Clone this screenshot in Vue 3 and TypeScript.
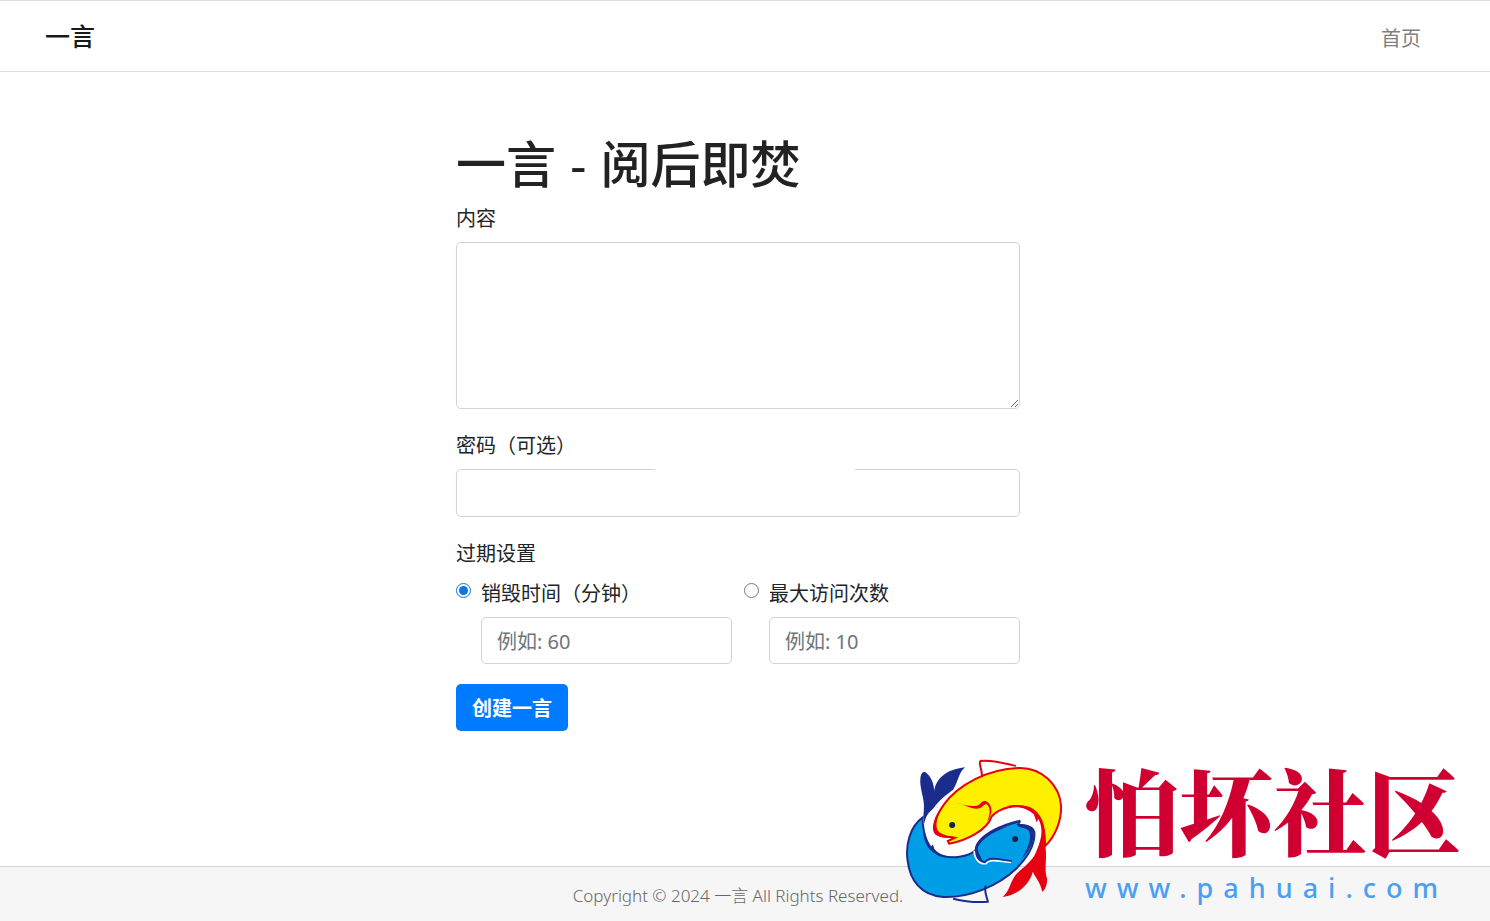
<script setup lang="ts">
import { ref } from 'vue'

type ExpiryMode = 'time' | 'visits'

const content = ref('')
const password = ref('')
const mode = ref<ExpiryMode>('time')
const minutes = ref('')
const visits = ref('')
</script>

<template>
  <div class="page">
    <header class="navbar">
      <a class="brand" href="#">一言</a>
      <nav>
        <a class="nav-link" href="#">首页</a>
      </nav>
    </header>

    <main class="main">
      <form class="form" @submit.prevent>
        <h1 class="title">一言 - 阅后即焚</h1>

        <div class="group">
          <label class="label" for="content">内容</label>
          <textarea id="content" v-model="content" class="control area"></textarea>
        </div>

        <div class="group">
          <label class="label" for="password">密码（可选）</label>
          <div class="password">
            <input id="password" v-model="password" class="control" type="text" />
          </div>
        </div>

        <fieldset class="group expiry">
          <legend class="label">过期设置</legend>
          <div class="options">
            <div class="option">
              <input id="mode-time" v-model="mode" class="radio" type="radio" name="mode" value="time" />
              <label class="option-label" for="mode-time">销毁时间（分钟）</label>
              <input v-model="minutes" class="control amount" type="text" placeholder="例如: 60" aria-label="销毁时间（分钟）" />
            </div>
            <div class="option">
              <input id="mode-visits" v-model="mode" class="radio" type="radio" name="mode" value="visits" />
              <label class="option-label" for="mode-visits">最大访问次数</label>
              <input v-model="visits" class="control amount" type="text" placeholder="例如: 10" aria-label="最大访问次数" />
            </div>
          </div>
        </fieldset>

        <button class="submit" type="submit">创建一言</button>
      </form>
    </main>

    <footer class="footer">Copyright © 2024 一言 All Rights Reserved.</footer>

    <div class="watermark">
      <svg class="fish" viewBox="40 36 485 450" aria-hidden="true">
        <path d="M92 96Q96 78 107 82C124 94 132 116 133 138C139 102 166 74 226 67C207 80 205 111 190 134C168 150 145 168 131 190C116 204 107 212 104 236Q98 216 102 196C106 160 87 130 92 96Z" fill="#1c2c8c" />
        <path d="M98 218C60 245 47 300 53 345C60 405 92 450 160 456C240 459 325 422 378 372C411 340 433 302 434 268C434 250 420 241 398 243L382 236C325 244 262 281 258 315C235 336 186 343 150 331C111 309 99 266 98 218Z" fill="#009ee7" stroke="#1c2c8c" stroke-width="6" />
        <path d="M101 244C104 277 118 292 121 310L129 298L134 313C148 329 176 338 204 335C174 343 139 333 119 313C104 293 97 269 101 244Z" fill="#1c2c8c" />
        <path d="M255 316C254 275 323 239 391 224L386 236C330 246 274 278 263 309C263 323 276 336 279 353C262 347 255 334 255 316Z" fill="#1c2c8c" />
        <path d="M253 317C254 342 268 359 288 356C300 340 329 350 364 352" fill="none" stroke="#fff" stroke-width="5" />
        <path d="M260 313C259 334 271 349 285 352C298 332 330 344 366 348" fill="none" stroke="#1c2c8c" stroke-width="5" />
        <path d="M334 250C352 243 370 238 386 233C381 243 366 243 350 247Z" fill="#009ee7" />
        <path d="M388 224C396 227 393 234 387 238C410 234 436 244 431 277C427 302 411 327 394 344C411 315 428 282 417 257C407 248 395 250 383 243" fill="#1c2c8c" />
        <path d="M190 461C230 471 264 473 294 470C291 455 283 443 287 422" fill="none" stroke="#1c2c8c" stroke-width="6" />
        <path d="M465 304C500 271 514 223 514 185C510 120 455 66 385 69C295 72 205 119 162 179C134 219 125 247 138 265C150 277 174 275 195 278L174 288L178 296C231 287 293 254 305 215C330 187 378 176 419 189C454 205 466 251 465 304Z" fill="#fff000" stroke="#e60012" stroke-width="6" />
        <path d="M161 181C133 218 124 250 134 265C147 281 174 279 197 279C174 271 146 270 141 250C137 231 146 207 161 181Z" fill="#e60012" />
        <path d="M197 174C229 182 247 185 262 182C276 177 273 166 288 168C311 180 309 209 292 230C302 207 303 188 290 177C278 179 281 189 262 191C241 192 229 179 197 174Z" fill="#e60012" />
        <path d="M276 96C279 77 264 54 272 48C306 44 342 54 378 63" fill="none" stroke="#e60012" stroke-width="6" />
        <path d="M347 184C391 174 421 182 445 208C462 226 469 263 467 306C472 343 462 378 472 401C472 421 465 436 457 440C452 412 436 397 429 380C418 423 378 451 338 456C359 441 360 412 379 388C399 367 428 349 439 320C458 280 460 246 445 221L441 233L432 208C408 187 377 181 347 184Z" fill="#e60012" />
        <circle cx="187" cy="240" r="9" fill="#0d2449" />
        <circle cx="376" cy="282" r="9" fill="#0d2449" />
      </svg>
      <div class="site">
        <span class="site-name">怕坏社区</span>
        <span class="site-url">www.pahuai.com</span>
      </div>
    </div>
  </div>
</template>

<style>
body {
  margin: 0;
  background: #fff;
}
</style>

<style scoped>
*,
*::before,
*::after {
  box-sizing: border-box;
}

.page {
  position: relative;
  display: flex;
  flex-direction: column;
  min-height: 100vh;
  overflow: hidden;
  color: #212529;
  font: 20px/30px "Noto Sans", "Noto Sans CJK SC", sans-serif;
}

.navbar {
  display: flex;
  align-items: baseline;
  justify-content: space-between;
  padding: 20px 69px 17px 45px;
  border-top: 1px solid #dfdfdf;
  border-bottom: 1px solid #dfdfdf;
}

.brand {
  color: #18191b;
  font-size: 25px;
  font-weight: 500;
  text-decoration: none;
}

.nav-link {
  color: #7f7f7f;
  text-decoration: none;
}

.main {
  flex: 1;
  padding: 62px 14px 40px 0;
}

.form {
  width: 564px;
  max-width: 100%;
  margin: 0 auto;
}

.title {
  margin: 0 0 4px;
  color: #222;
  font-family: "Liberation Sans", "Noto Sans CJK SC", sans-serif;
  font-size: 50px;
  font-weight: 500;
  line-height: 64px;
}

.group {
  margin-bottom: 20px;
}

.label {
  display: block;
  margin-bottom: 6px;
  padding: 0;
  line-height: 34px;
}

.control {
  display: block;
  width: 100%;
  height: 48px;
  padding: 9px 15px 7px;
  border: 1px solid #ced4da;
  border-radius: 5px;
  background: #fff;
  color: #495057;
  font: inherit;
  outline: 0;
}

.control::placeholder {
  color: #6c757d;
  opacity: 1;
}

.area {
  height: 167px;
  resize: vertical;
}

.password {
  position: relative;
}

.password::before {
  content: "";
  position: absolute;
  top: 0;
  left: 199px;
  width: 200px;
  height: 1px;
  background: #fff;
}

.expiry {
  min-width: 0;
  padding: 0;
  border: 0;
  margin-inline: 0;
}

.options {
  display: grid;
  grid-template-columns: 1fr 1fr;
  gap: 12px;
}

.option {
  display: grid;
  grid-template-columns: 16px 1fr;
  column-gap: 9px;
  row-gap: 6px;
}

.option-label {
  line-height: 34px;
}

.radio {
  width: 15px;
  height: 15px;
  margin: 6px 0 0;
  accent-color: #0d75e8;
}

.amount {
  grid-column: 2;
  height: 47px;
}

.submit {
  display: block;
  height: 47px;
  padding: 2px 16px 0;
  border: 0;
  border-radius: 5px;
  background: #007bff;
  color: #fff;
  font: inherit;
  font-weight: 600;
}

.footer {
  padding: 14px 14px 10px 0;
  border-top: 1px solid #d6d6d6;
  background: #f6f6f6;
  color: #666;
  font-size: 17px;
  font-weight: 300;
  text-align: center;
}

.watermark {
  position: absolute;
  right: 29px;
  bottom: 14px;
  display: flex;
  align-items: flex-start;
  gap: 20px;
  pointer-events: none;
}

.fish {
  width: 162px;
  height: 150px;
}

.site {
  display: flex;
  flex-direction: column;
}

.site-name {
  color: #cf0031;
  font-family: "Noto Serif CJK SC", "Noto Sans CJK SC", serif;
  font-size: 94px;
  font-weight: 900;
  line-height: 104px;
}

.site-url {
  padding-top: 8px;
  color: #4c9ff0;
  font-family: "Noto Sans", sans-serif;
  font-size: 27px;
  font-weight: 500;
  letter-spacing: 10px;
  line-height: 38px;
}
</style>
